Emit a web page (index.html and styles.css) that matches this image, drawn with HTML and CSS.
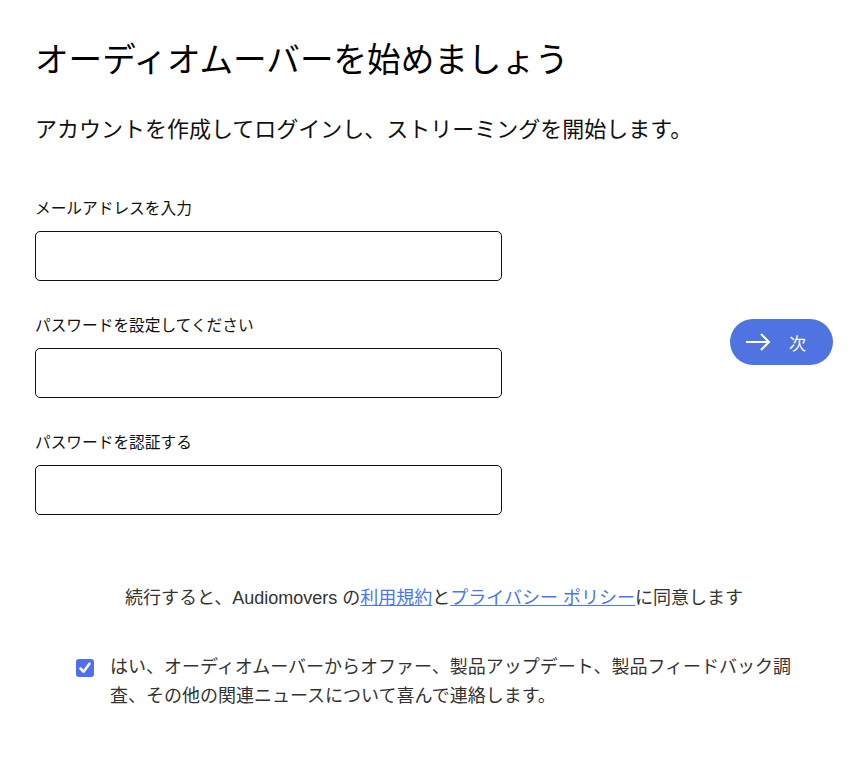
FILE: index.html
```html
<!DOCTYPE html>
<html lang="ja">
<head>
    <meta charset="UTF-8">
    <meta name="viewport" content="width=device-width, initial-scale=1.0">
    <title>オーディオムーバーを始めましょう</title>
    <link rel="stylesheet" href="styles.css">
</head>
<body>
    <div class="page">
        <h1>オーディオムーバーを始めましょう</h1>
        <p class="lead">アカウントを作成してログインし、ストリーミングを開始します。</p>

        <div class="signup">
            <form class="fields" id="signupForm">
                <label for="email">メールアドレスを入力</label>
                <input type="email" id="email" name="email">

                <label for="password">パスワードを設定してください</label>
                <input type="password" id="password" name="password">

                <label for="confirm">パスワードを認証する</label>
                <input type="password" id="confirm" name="confirm">
            </form>

            <button type="submit" form="signupForm" class="next-btn">
                <svg width="26" height="18" viewBox="0 0 26 18" fill="none" stroke="#fff" stroke-width="2">
                    <path d="M1 9h23"/>
                    <path d="M16 1l8 8-8 8"/>
                </svg>
                <span>次</span>
            </button>
        </div>

        <p class="terms">続行すると、Audiomovers の<a href="#">利用規約</a>と<a href="#">プライバシー ポリシー</a>に同意します</p>

        <label class="optin">
            <span class="check">
                <svg width="18" height="18" viewBox="0 0 18 18">
                    <rect width="18" height="18" rx="3" fill="#4f6ef0"/>
                    <path d="M4.5 9.5l3 3.2 6-8" fill="none" stroke="#fff" stroke-width="2.6" stroke-linecap="round" stroke-linejoin="round"/>
                </svg>
            </span>
            <span class="optin-text">はい、オーディオムーバーからオファー、製品アップデート、製品フィードバック調査、その他の関連ニュースについて喜んで連絡します。</span>
        </label>
    </div>
</body>
</html>
```

FILE: styles.css
```css
body {
    margin: 0;
    background: #fff;
    color: #111;
    font-family: "Liberation Sans", "Noto Sans CJK JP", sans-serif;
}

.page {
    padding: 37px 23px 40px 35px;
}

h1 {
    margin: 0;
    font-size: 33.6px;
    line-height: 48px;
    font-weight: 400;
    color: #000;
}

.lead {
    margin: 29px 0 0;
    font-size: 22px;
    line-height: 32px;
}

.signup {
    display: flex;
    justify-content: space-between;
    align-items: center;
    margin-top: 51px;
}

.fields {
    display: flex;
    flex-direction: column;
    width: 467px;
}

.fields label {
    font-size: 15.7px;
    line-height: 24px;
    margin-bottom: 10px;
}

.fields input {
    box-sizing: border-box;
    height: 50px;
    margin: 0 0 33px;
    padding: 0 12px;
    border: 1px solid #111;
    border-radius: 5px;
    font-size: 16px;
}

.fields input:last-child {
    margin-bottom: 0;
}

.next-btn {
    display: flex;
    align-items: center;
    gap: 18px;
    width: 103px;
    height: 46px;
    margin-bottom: 28px;
    padding: 0 0 0 15px;
    background-color: #4f74e2;
    color: #fff;
    border: none;
    border-radius: 23px;
    font-family: inherit;
    font-size: 17px;
    cursor: pointer;
}

.terms {
    margin: 69px 0 0;
    text-align: center;
    font-size: 18px;
    line-height: 28px;
    color: #333;
}

.terms a {
    color: #4a76ee;
}

.optin {
    display: flex;
    align-items: flex-start;
    gap: 16px;
    margin: 41px 0 0 41px;
    font-size: 18px;
    line-height: 29px;
    color: #333;
}

.check {
    display: block;
    height: 18px;
    margin-top: 4px;
}

.optin-text {
    width: 690px;
}
```
